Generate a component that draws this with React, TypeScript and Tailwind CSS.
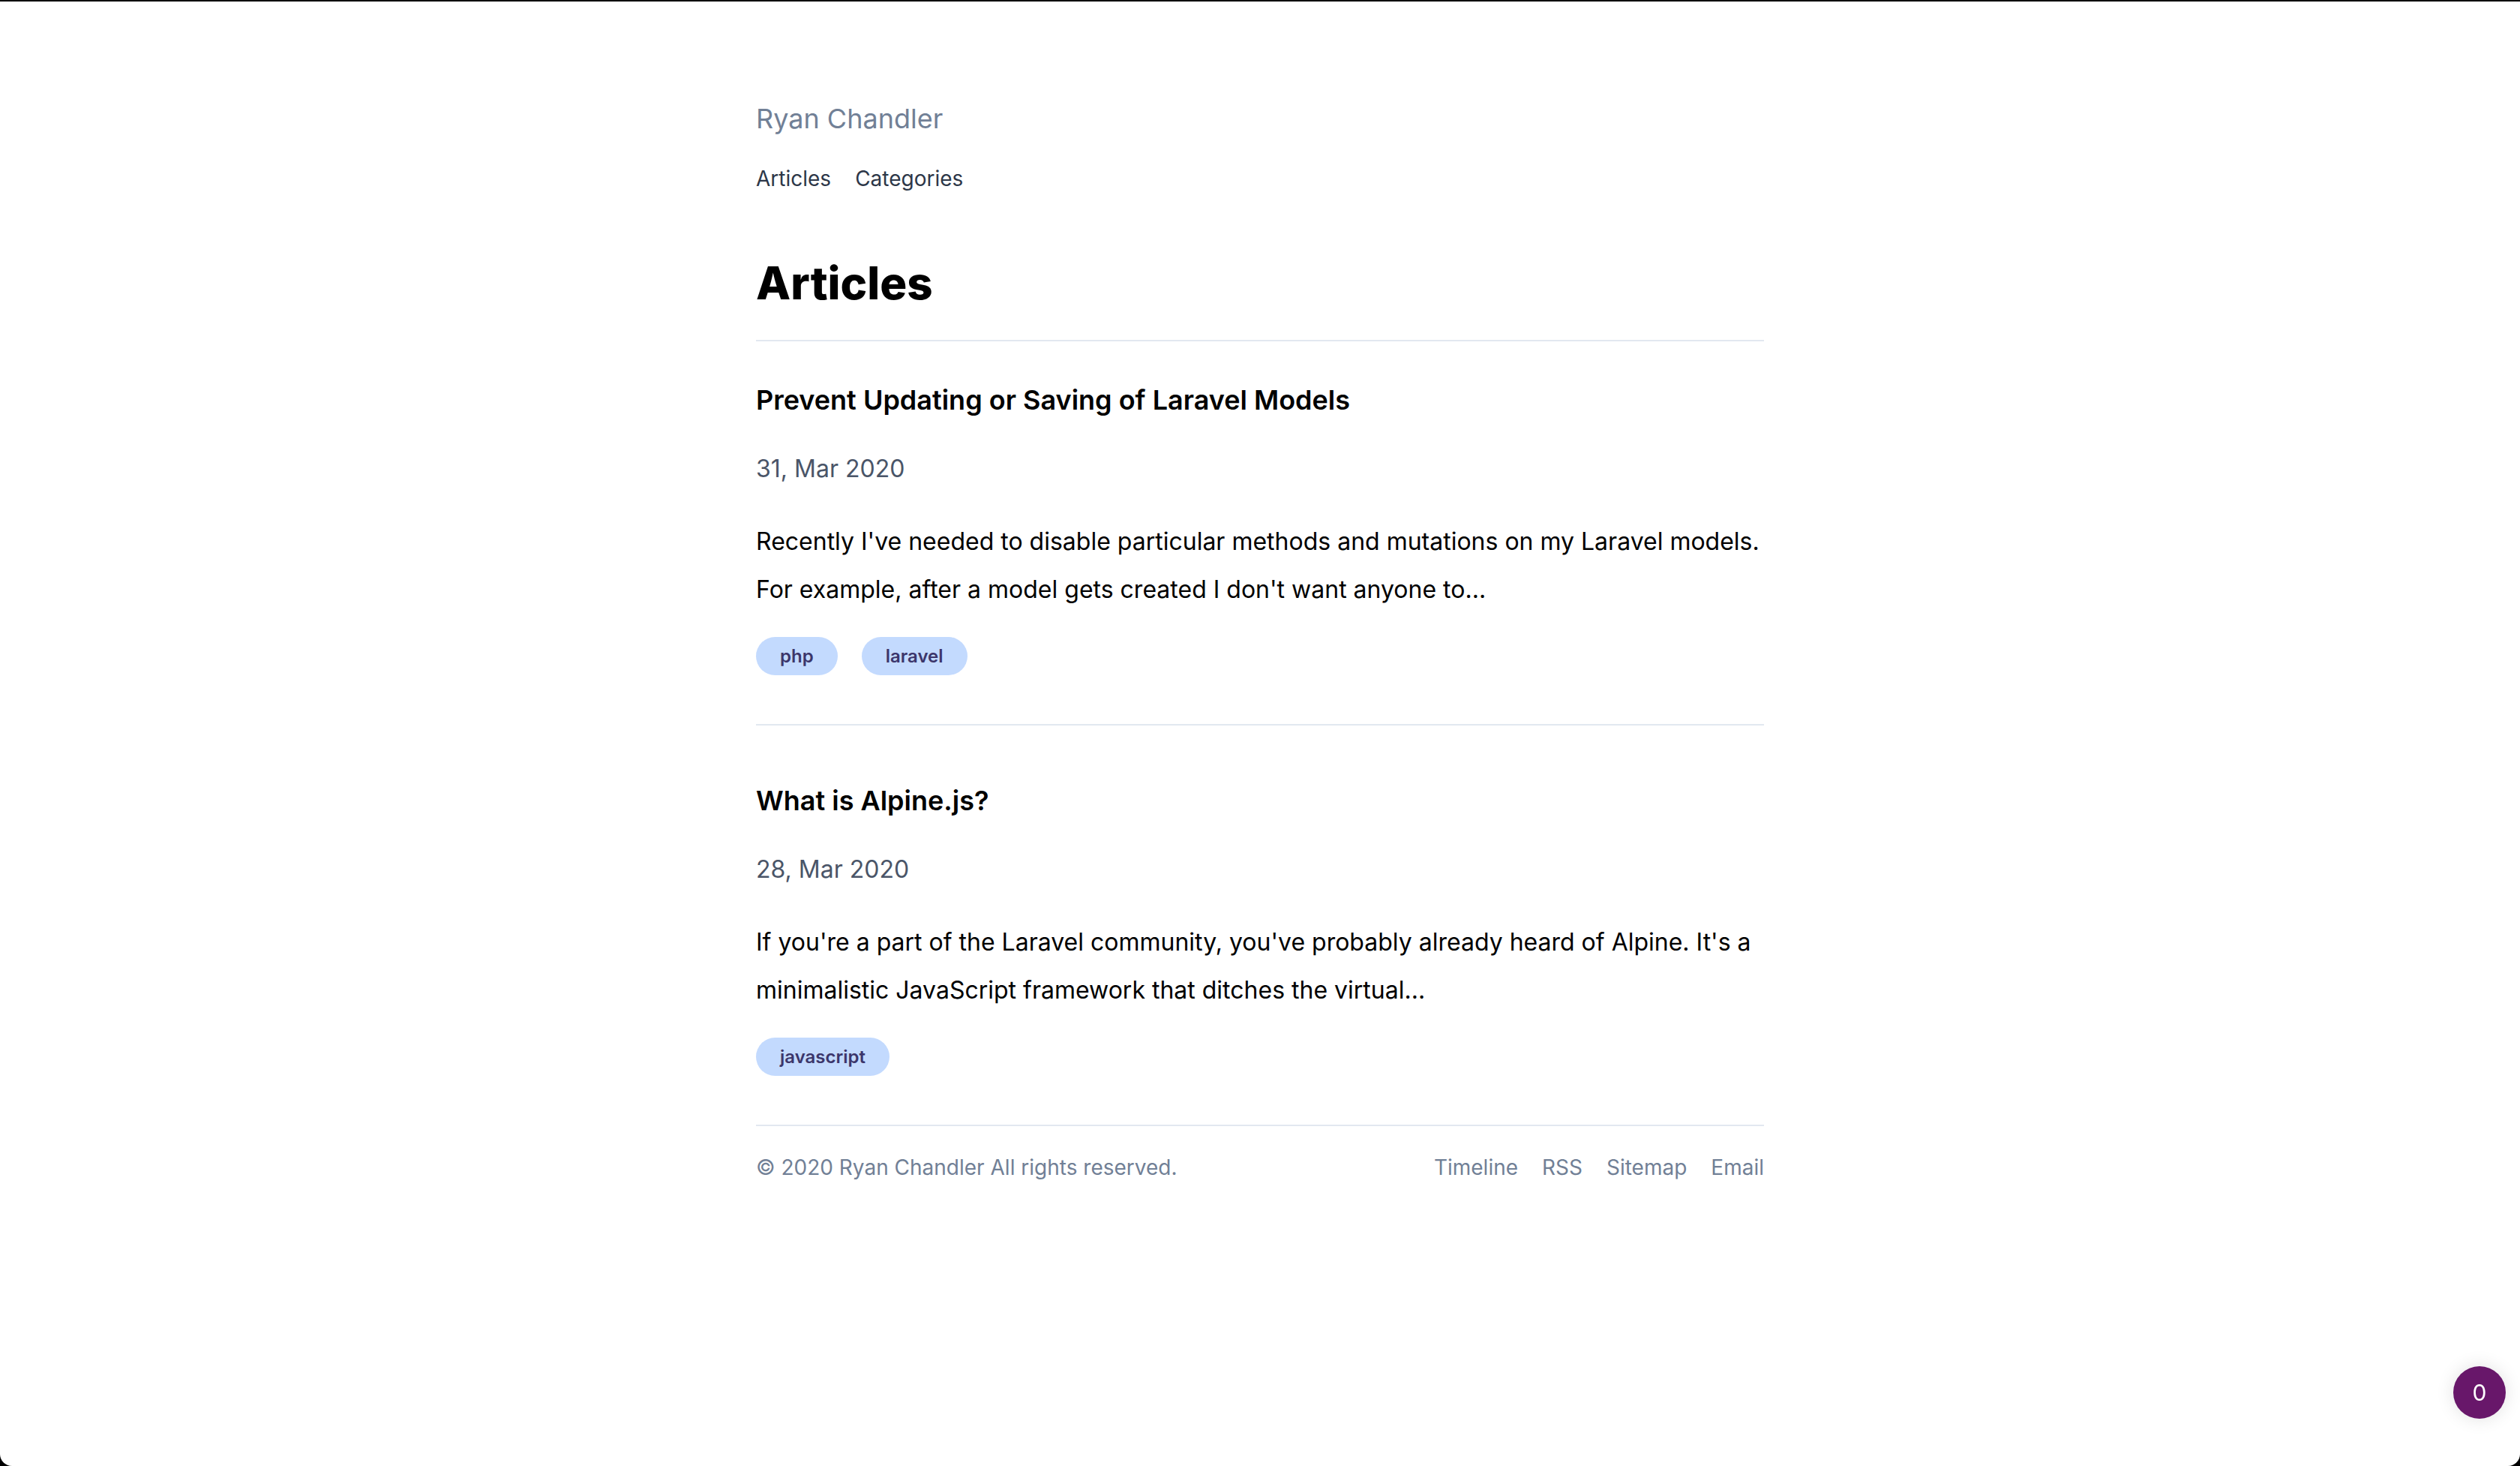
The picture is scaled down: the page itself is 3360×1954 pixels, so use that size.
import React from 'react';

const posts = [
  {
    title: 'Prevent Updating or Saving of Laravel Models',
    date: '31, Mar 2020',
    excerpt:
      "Recently I've needed to disable particular methods and mutations on my Laravel models. For example, after a model gets created I don't want anyone to...",
    tags: ['php', 'laravel'],
  },
  {
    title: 'What is Alpine.js?',
    date: '28, Mar 2020',
    excerpt:
      "If you're a part of the Laravel community, you've probably already heard of Alpine. It's a minimalistic JavaScript framework that ditches the virtual...",
    tags: ['javascript'],
  },
];

export default function App() {
  return (
    <div className="min-h-screen bg-black pt-[2px] font-['Inter','Noto_Sans',sans-serif]">
      <div className="min-h-[1952px] bg-white rounded-b-[16px]">
        <div className="w-[1344px] mx-auto pt-[128px]">
          {/* Header */}
          <a className="block text-[36px] leading-[56px] text-[#718096]">Ryan Chandler</a>
          <nav className="mt-[32px] flex gap-[32px] text-[28px] leading-[40px] text-[#2d3748]">
            <a>Articles</a>
            <a>Categories</a>
          </nav>

          <h1 className="mt-[83px] text-[60px] leading-[72px] font-extrabold text-black pb-[40px] border-b-2 border-[#e2e8f0]">
            Articles
          </h1>

          {/* Posts */}
          {posts.map((post, i) => (
            <article
              key={post.title}
              className={`${i === 0 ? 'pt-[50px]' : 'pt-[72px]'} pb-[65px] border-b-2 border-[#e2e8f0]`}
            >
              <h2 className="text-[36px] leading-[56px] font-semibold text-black">{post.title}</h2>
              <p className="mt-[40px] text-[32px] leading-[48px] text-[#4a5568]">{post.date}</p>
              <p className="mt-[41px] text-[32px] leading-[64px] text-black">{post.excerpt}</p>
              <div className="mt-[31px] flex gap-[32px]">
                {post.tags.map((tag) => (
                  <span
                    key={tag}
                    className="h-[51px] px-[32px] flex items-center rounded-full bg-[#c3dafe] text-[#3c366b] text-[24px] font-semibold"
                  >
                    {tag}
                  </span>
                ))}
              </div>
            </article>
          ))}

          {/* Footer */}
          <footer className="pt-[35px] flex justify-between text-[28px] leading-[40px] text-[#718096]">
            <p>© 2020 Ryan Chandler All rights reserved.</p>
            <div className="flex gap-[32px]">
              <a>Timeline</a>
              <a>RSS</a>
              <a>Sitemap</a>
              <a>Email</a>
            </div>
          </footer>
        </div>
      </div>

      <div className="fixed right-[19px] bottom-[63px] w-[70px] h-[70px] rounded-full bg-[#68176a] text-white text-[30px] flex items-center justify-center shadow-[0_0_24px_rgba(0,0,0,0.12)]">
        0
      </div>
    </div>
  );
}
